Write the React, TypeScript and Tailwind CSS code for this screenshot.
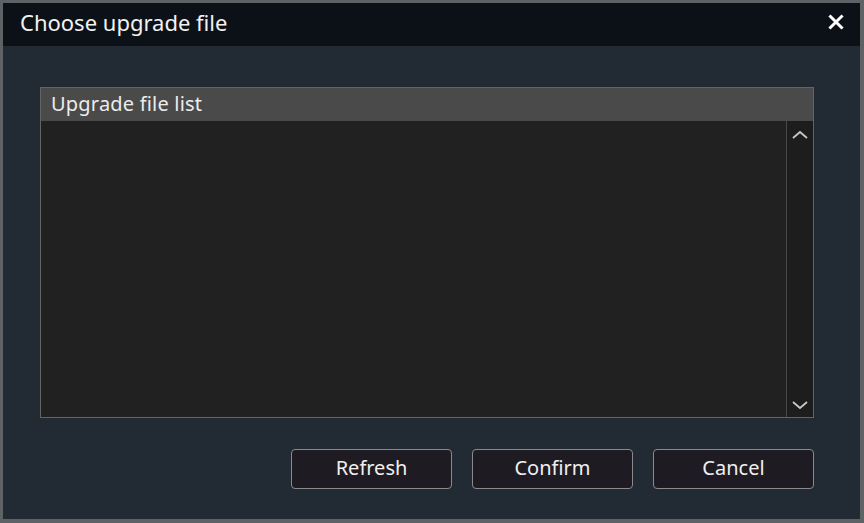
import React from "react";

export default function App() {
  const font = { fontFamily: '"Noto Sans", "Open Sans", sans-serif' };
  return (
    <div className="w-[864px] h-[523px] bg-[#5f6265] p-[3px] pr-[4px] pb-[4px]" style={font}>
      <div className="flex h-full w-full flex-col bg-[#222a33]">
        <div className="flex h-[43px] items-center justify-between bg-[#0c1118] pb-[5px] pl-[17px] pr-[16px]">
          <span className="text-[22px] leading-none text-[#f2f2f2]">Choose upgrade file</span>
          <svg width="16" height="16" viewBox="0 0 16 16">
            <path d="M2.5 2.5 L13.5 13.5 M13.5 2.5 L2.5 13.5" stroke="#ffffff" strokeWidth="3" strokeLinecap="square" />
          </svg>
        </div>
        <div className="flex flex-1 flex-col pl-[37px] pr-[46px] pt-[41px]">
          <div className="flex h-[331px] flex-col border border-[#646464] bg-[#212121]">
            <div className="flex h-[33px] items-center bg-[#4a4a4a] pb-[2px] pl-[10px] text-[20px] tracking-[0.2px] text-[#ececec]">
              Upgrade file list
            </div>
            <div className="flex flex-1">
              <div className="flex-1" />
              <div className="flex w-[27px] flex-col items-center justify-between border-l border-[#4a4a4a] bg-[#1d1d1d] pb-[7px] pt-[9px]">
                <svg width="18" height="10" viewBox="0 0 18 10">
                  <path d="M2 8 L9 2 L16 8" stroke="#c8c8c8" strokeWidth="1.8" fill="none" />
                </svg>
                <svg width="18" height="10" viewBox="0 0 18 10">
                  <path d="M2 2 L9 8 L16 2" stroke="#c8c8c8" strokeWidth="1.8" fill="none" />
                </svg>
              </div>
            </div>
          </div>
          <div className="mt-[31px] flex justify-end gap-[20px]">
            {["Refresh", "Confirm", "Cancel"].map((t) => (
              <button
                key={t}
                className="flex h-[40px] w-[161px] items-center justify-center rounded-[4px] border border-[#8a8a8e] bg-[#1e1c22] pb-[3px] text-[20px] text-[#f0f0f0]"
              >
                {t}
              </button>
            ))}
          </div>
        </div>
      </div>
    </div>
  );
}
